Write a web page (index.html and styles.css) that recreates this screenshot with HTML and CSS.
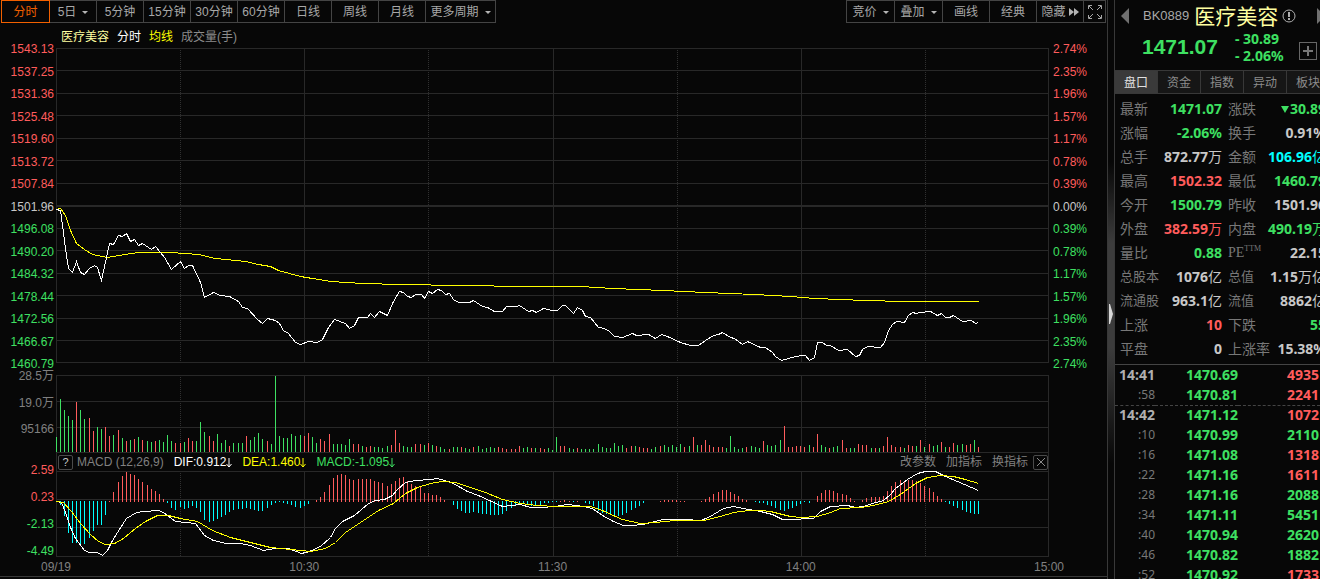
FILE: index.html
```html
<!DOCTYPE html>
<html lang="zh-CN">
<head>
<meta charset="utf-8">
<title>医疗美容 BK0889</title>
<link rel="stylesheet" href="styles.css">
</head>
<body>
<main class="board">
  <nav class="toolbar">
    <div class="group">
      <button class="tool active">分时</button>
      <button class="tool">5日<i class="caret"></i></button>
      <button class="tool">5分钟</button>
      <button class="tool">15分钟</button>
      <button class="tool">30分钟</button>
      <button class="tool">60分钟</button>
      <button class="tool">日线</button>
      <button class="tool">周线</button>
      <button class="tool">月线</button>
      <button class="tool wide">更多周期<i class="caret"></i></button>
    </div>
    <div class="group">
      <button class="tool menu">竞价<i class="caret"></i></button>
      <button class="tool menu">叠加<i class="caret"></i></button>
      <button class="tool">画线</button>
      <button class="tool">经典</button>
      <button class="tool">隐藏<svg class="skip" width="10" height="8" viewBox="0 0 10 8"><path d="M0 0L5 4L0 8ZM5 0L10 4L5 8Z" fill="#b4b4b4"/></svg></button>
      <button class="tool icon" aria-label="全屏"><svg width="14" height="14" viewBox="0 0 14 14" fill="none" stroke="#a8a8a8"><path d="M.5 4V.5H4M10 .5H13.5V4M13.5 10V13.5H10M4 13.5H.5V10M1 1L5 5M13 1L9 5M13 13L9 9M1 13L5 9"/></svg></button>
    </div>
  </nav>

  <div class="legend">
    <span class="cream">医疗美容</span><span class="white">分时</span><span class="yellow">均线</span><span class="muted">成交量(手)</span>
  </div>

  <section class="panel price">
    <div class="axis left">
      <span class="up">1543.13</span><span class="up">1537.25</span><span class="up">1531.36</span><span class="up">1525.48</span><span class="up">1519.60</span><span class="up">1513.72</span><span class="up">1507.84</span><span class="flat">1501.96</span><span class="down">1496.08</span><span class="down">1490.20</span><span class="down">1484.32</span><span class="down">1478.44</span><span class="down">1472.56</span><span class="down">1466.67</span><span class="down">1460.79</span>
    </div>
    <div class="plot"><svg id="price" viewBox="0 0 993 315" preserveAspectRatio="none"></svg></div>
    <div class="axis right">
      <span class="up">2.74%</span><span class="up">2.35%</span><span class="up">1.96%</span><span class="up">1.57%</span><span class="up">1.17%</span><span class="up">0.78%</span><span class="up">0.39%</span><span class="flat">0.00%</span><span class="down">0.39%</span><span class="down">0.78%</span><span class="down">1.17%</span><span class="down">1.57%</span><span class="down">1.96%</span><span class="down">2.35%</span><span class="down">2.74%</span>
    </div>
  </section>

  <section class="panel volume">
    <div class="axis left volume-axis"><span>28.5万</span><span>19.0万</span><span>95166</span></div>
    <div class="plot"><svg id="volume" viewBox="0 0 993 78" preserveAspectRatio="none"></svg></div>
  </section>

  <header class="macd-head">
    <button class="box help" aria-label="帮助">?</button>
    <span class="muted">MACD (12,26,9)</span>
    <span class="white">DIF:0.912<svg class="fall" viewBox="0 0 6 10"><path d="M3 0V9M.5 6L3 9L5.5 6"/></svg></span>
    <span class="yellow">DEA:1.460<svg class="fall" viewBox="0 0 6 10"><path d="M3 0V9M.5 6L3 9L5.5 6"/></svg></span>
    <span class="down">MACD:-1.095<svg class="fall" viewBox="0 0 6 10"><path d="M3 0V9M.5 6L3 9L5.5 6"/></svg></span>
    <div class="actions">
      <button class="link">改参数</button><button class="link">加指标</button><button class="link">换指标</button>
      <button class="box" aria-label="关闭"><svg width="8" height="8" viewBox="0 0 8 8" stroke="#8a8a8a"><path d="M0 0L8 8M8 0L0 8"/></svg></button>
    </div>
  </header>

  <section class="panel macd">
    <div class="axis left macd-axis"><span class="up">2.59</span><span class="up">0.23</span><span class="down">-2.13</span><span class="down">-4.49</span></div>
    <div class="plot"><svg id="macd" viewBox="0 0 993 86" preserveAspectRatio="none"></svg></div>
  </section>

  <div class="times"><span>09/19</span><span>10:30</span><span>11:30</span><span>14:00</span><span>15:00</span></div>
</main>

<div class="splitter"><svg width="4" height="20" viewBox="0 0 4 20"><path d="M0 0H1L4 10L1 20H0Z" fill="#d8d8d8"/></svg></div>

<aside class="quote">
  <div class="quote-body">
    <header class="head">
      <div class="title">
        <button class="prev" aria-label="上一个"></button>
        <span class="code">BK0889</span>
        <h1>医疗美容</h1>
        <svg class="info" width="14" height="14" viewBox="0 0 14 14" fill="none" stroke="#b0b0b0"><circle cx="7" cy="7" r="6"/><path d="M7 3V8M7 9V11" stroke-width="2"/></svg>
        <button class="next" aria-label="下一个"></button>
      </div>
      <div class="now">
        <strong class="last">1471.07</strong>
        <div class="change"><span>- 30.89</span><span>- 2.06%</span></div>
        <button class="add" aria-label="加自选"><svg width="10" height="10" viewBox="0 0 10 10" stroke="#777" stroke-width="2"><path d="M5 0V10M0 5H10"/></svg></button>
      </div>
    </header>

    <nav class="tabs">
      <button class="tab on">盘口</button><button class="tab">资金</button><button class="tab">指数</button><button class="tab">异动</button><button class="tab">板块</button>
    </nav>

    <table class="facts">
      <colgroup><col class="name"><col class="value"><col class="name-2"><col></colgroup>
      <tr><th>最新</th><td class="down">1471.07</td><th>涨跌</th><td class="down"><i class="drop"></i>30.89</td></tr>
      <tr><th>涨幅</th><td class="down">-2.06%</td><th>换手</th><td>0.91%</td></tr>
      <tr><th>总手</th><td>872.77<b>万</b></td><th>金额</th><td class="cyan">106.96<b>亿</b></td></tr>
      <tr><th>最高</th><td class="up">1502.32</td><th>最低</th><td class="down">1460.79</td></tr>
      <tr><th>今开</th><td class="down">1500.79</td><th>昨收</th><td>1501.96</td></tr>
      <tr><th>外盘</th><td class="up">382.59<b>万</b></td><th>内盘</th><td class="down">490.19<b>万</b></td></tr>
      <tr><th>量比</th><td class="down">0.88</td><th class="pe">PE<sup>TTM</sup></th><td>22.15</td></tr>
      <tr><th class="small">总股本</th><td>1076<b>亿</b></td><th class="small">总值</th><td>1.15<b>万亿</b></td></tr>
      <tr><th class="small">流通股</th><td>963.1<b>亿</b></td><th class="small">流值</th><td>8862<b>亿</b></td></tr>
      <tr><th>上涨</th><td class="up">10</td><th>下跌</th><td class="down">55</td></tr>
      <tr><th>平盘</th><td>0</td><th>上涨率</th><td>15.38%</td></tr>
    </table>

    <table class="trades">
      <tr><th class="minute">14:41</th><td class="down">1470.69</td><td class="up">4935</td></tr>
      <tr><th>:58</th><td class="down">1470.81</td><td class="up">2241</td></tr>
      <tr class="split"><th class="minute">14:42</th><td class="down">1471.12</td><td class="up">1072</td></tr>
      <tr><th>:10</th><td class="down">1470.99</td><td class="down">2110</td></tr>
      <tr><th>:16</th><td class="down">1471.08</td><td class="up">1318</td></tr>
      <tr><th>:22</th><td class="down">1471.16</td><td class="up">1611</td></tr>
      <tr><th>:28</th><td class="down">1471.16</td><td class="down">2088</td></tr>
      <tr><th>:34</th><td class="down">1471.11</td><td class="down">5451</td></tr>
      <tr><th>:40</th><td class="down">1470.94</td><td class="down">2620</td></tr>
      <tr><th>:46</th><td class="down">1470.82</td><td class="down">1882</td></tr>
      <tr><th>:52</th><td class="down">1470.92</td><td class="up">1733</td></tr>
    </table>
  </div>
</aside>
<script src="charts.js"></script>
</body>
</html>
```
FILE: styles.css
```css
* { box-sizing: border-box; }

body {
  margin: 0;
  height: 100vh;
  display: flex;
  overflow: hidden;
  background: #070707;
  color: #c8c8c8;
  font: 12px/16px "Liberation Sans", "Noto Sans CJK SC", sans-serif;
}

button {
  margin: 0;
  padding: 0;
  border: 0;
  background: none;
  color: inherit;
  font: inherit;
}

.up { color: #ff5c5c; }
.down { color: #3ee062; }
.flat { color: #c8c8c8; }
.white { color: #fff; }
.yellow { color: #ff0; }
.cream { color: #ffffa0; }
.cyan { color: #0ff; }
.muted { color: #808080; }

/* chart area */
.board {
  flex: 1;
  min-width: 0;
  display: flex;
  flex-direction: column;
  padding-bottom: 2px;
}

.toolbar {
  display: flex;
  justify-content: space-between;
  padding: 0 2px 0 1px;
}

.group { display: flex; }

.tool {
  display: flex;
  align-items: center;
  justify-content: center;
  width: 48px;
  height: 23px;
  margin-right: -1px;
  padding-top: 1px;
  border: 1px solid #444;
  color: #a8a8a8;
  white-space: nowrap;
}

.tool.active {
  position: relative;
  border-color: #f26000;
  color: #f26000;
}

.tool.active,
.tool.menu { width: 49px; }
.tool.wide { width: 71px; }
.tool.icon { width: 23px; }
.skip { margin-left: 3px; }

.caret {
  margin-left: 6px;
  border: 3px solid transparent;
  border-top-color: #b4b4b4;
  border-bottom: 0;
}

.legend {
  display: flex;
  gap: 8px;
  height: 25px;
  padding: 6px 0 0 61px;
}

.legend .muted { color: #8c8c8c; }

.panel {
  display: grid;
  grid-template-columns: 56px 1fr 58px;
}

.price {
  flex: 1;
  min-height: 0;
  margin-bottom: 12px;
}

.volume { height: 78px; }
.macd { height: 86px; }

.plot {
  position: relative;
  min-height: 0;
}

.plot svg {
  display: block;
  position: absolute;
  inset: 0;
  width: 100%;
  height: 100%;
  shape-rendering: crispEdges;
}

.plot path {
  fill: none;
  vector-effect: non-scaling-stroke;
}

.grid { stroke: #282828; }
.dots { stroke: #303030; stroke-dasharray: 1 1; }
.zero { stroke: #282828; stroke-width: 2; }
.bar-up { stroke: #ff5c5c; }
.bar-down { stroke: #3ee062; }
.bar-under { stroke: #0ff; }
.line-white { stroke: #fff; }
.line-yellow { stroke: #ff0; }

.axis {
  display: flex;
  flex-direction: column;
  justify-content: space-between;
  margin: -7px 0 -9px;
}

.axis.left {
  padding-right: 2px;
  text-align: right;
}

.axis.right { padding-left: 4px; }

.axis.volume-axis {
  margin-bottom: 16px;
  color: #808080;
}

.axis.macd-axis { margin: -9px 0 -2px; }

.macd-head {
  display: flex;
  align-items: center;
  gap: 10px;
  height: 18px;
  margin: 0 58px 0 56px;
  padding-left: 1px;
  border: 1px solid #282828;
  border-width: 0 1px;
  white-space: nowrap;
}

.macd-head .help { margin-right: -6px; }

.box {
  display: flex;
  align-items: center;
  justify-content: center;
  width: 15px;
  height: 15px;
  border: 1px solid #4a4a4a;
  border-radius: 2px;
  color: #c8c8c8;
  font-size: 11px;
}

.fall {
  width: 6px;
  height: 10px;
  margin-bottom: -2px;
  fill: none;
  stroke: currentColor;
}

.actions {
  display: flex;
  align-items: center;
  gap: 10px;
  margin-left: auto;
  color: #808080;
}

.actions .box { margin-left: -5px; }

.times {
  display: flex;
  justify-content: space-between;
  height: 19px;
  margin: 0 34px 0 32px;
  padding-top: 2px;
  color: #808080;
}

.times span {
  width: 48px;
  text-align: center;
}

.board::after {
  content: "";
  border-top: 1px solid #383838;
}

.splitter {
  display: flex;
  align-items: center;
  width: 8px;
  padding: 48px 0 0 1px;
  border: 1px solid #383838;
  border-width: 0 1px;
  background: linear-gradient(#070707 28%, #3c3c3c 42%, #3c3c3c 60%, #070707 80%);
}

/* quote panel */
.quote {
  width: 205px;
  overflow: hidden;
}

.quote-body { width: 216px; }

.head { height: 70px; }

.title {
  display: flex;
  align-items: center;
  height: 32px;
  padding-left: 6px;
}

.prev,
.next {
  border: 8px solid transparent;
  border-width: 8px 8px 8px 0;
  border-right-color: #707070;
}

.next {
  margin-left: 21px;
  border-width: 8px 0 8px 8px;
  border-left-color: #707070;
}

.code {
  margin-left: 14px;
  color: #a8a8a8;
  font-size: 13px;
}

.title h1 {
  margin: 0 0 0 5px;
  color: #ffffa0;
  font: 21px/28px "Noto Sans CJK SC", sans-serif;
  padding-bottom: 3px;
}

.info { margin-left: 4px; }

.now {
  display: flex;
  align-items: center;
  margin-top: -2px;
  padding-left: 27px;
  color: #3ee062;
}

.last {
  font-size: 21px;
  line-height: 30px;
}

.change {
  display: grid;
  width: 64px;
  margin-left: 17px;
  font: bold 14px/17px "Noto Sans", sans-serif;
}

.add {
  display: grid;
  place-items: center;
  width: 18px;
  height: 18px;
  margin-top: 8px;
  border: 1px solid #666;
}

.tabs {
  display: flex;
  height: 24px;
  border: 1px solid #383838;
  border-width: 1px 0;
}

.tab {
  flex: none;
  width: 43px;
  padding-top: 1px;
  border-right: 1px solid #383838;
  background: #161616;
  color: #8c8c8c;
}

.tab.on {
  background: #3a3a3a;
  color: #e0e0e0;
}

table {
  width: 100%;
  border-collapse: collapse;
  table-layout: fixed;
}

.facts { margin-top: 3px; }
.facts .name { width: 47px; }
.facts .value { width: 60px; }
.facts .name-2 { width: 38px; }

.facts th,
.facts td {
  height: 24px;
  padding: 0;
  font-size: 14px;
  line-height: 20px;
  white-space: nowrap;
}

.facts th {
  padding-left: 5px;
  color: #787878;
  font-weight: normal;
  text-align: left;
}

.facts td + th { padding-left: 6px; }
.facts th.small { font-size: 13px; }
.facts th.pe { font-family: "Liberation Serif", serif; }

.facts sup {
  font-size: 8px;
  line-height: 8px;
}

.facts td {
  font-family: "Noto Sans", "Noto Sans CJK SC", sans-serif;
  font-weight: bold;
  text-align: right;
}

.facts td b { font-weight: normal; }
.facts td:last-child { padding-right: 5px; }

.drop {
  display: inline-block;
  margin: 0 1px 1px 0;
  border: 4px solid transparent;
  border-top: 7px solid #3ee062;
  border-bottom: 0;
}

.trades {
  width: 205px;
  margin-top: 3px;
  border-top: 1px solid #444;
}

.trades th,
.trades td {
  height: 20px;
  padding: 0;
  font: bold 14px/20px "Noto Sans", sans-serif;
}

.trades th {
  width: 40px;
  color: #787878;
  font-size: 12px;
  font-weight: normal;
  text-align: right;
}

.trades th.minute {
  color: #b0b0b0;
  font-size: 14px;
  font-weight: bold;
}

.trades td { text-align: right; }
.trades th + td { width: 83px; }
.trades td:last-child { padding-right: 1px; }

.trades .split th,
.trades .split td {
  height: 19px;
  border-top: 1px dashed #444;
  line-height: 18px;
}
```
FILE: charts.js
```js
// One bar per trading minute, 240 minutes across the plot.
const STEP = 993 / 240;

const volume = `g15 g53 g42 g36 g32 r50 g42 g33 r34 r21 g25 g23 r25 r16 g17 r22 g14 r11 g12 r13
g15 r12 g11 g10 r11 g12 g10 g17 g11 r9 r9 g10 r14 r11 g11 g30 g20 r16 r11 g18
g9 g12 r6 g9 g9 g9 r16 g12 g15 g19 g13 r11 g8 g76 g16 g14 g14 g18 g16 g17
r16 r19 g15 g9 r13 r11 r18 g8 g8 g8 g7 g13 r8 r8 g6 r5 r6 g5 g5 g4
g6 r7 r22 r9 g6 g5 g5 r8 r8 g7 r9 g7 r6 g5 g3 r3 g5 g5 r5 g4
g3 r5 g6 g3 g4 g5 g4 r5 r4 r3 r3 r3 r6 g4 g5 r4 g4 r4 r3 g4
g2 g15 r6 r6 g4 g3 r4 g3 g3 g3 g3 g8 g5 g4 g4 g9 g6 g7 r4 r6
g6 r5 r4 r4 g3 g5 r6 g7 g5 g7 g5 g8 r5 g6 r15 g7 r7 r12 r7 r5
r5 r5 g4 g16 g5 g3 g4 r5 g6 g5 g4 r11 g7 g6 g7 g12 r26 r5 r5 r6
r6 r5 g7 r5 r18 g7 g5 r4 g5 g6 r12 r4 g4 g4 r8 r7 r7 g4 r4 g4
r6 r15 r7 r5 r5 g4 r7 r6 g6 r12 g5 r8 g6 g7 r10 g5 r5 r9 g7 g8
r7 r8 g12 r5`.split(/\s+/);

const macd = `0 -4 -15 -32 -42 -42 -44 -43 -37 -30 -24 -24 -14 1 10 20 26 30 28 27
23 20 17 13 11 8 3 -2 -7 -9 -6 -8 -7 -5 -7 -11 -19 -21 -20 -18
-16 -14 -11 -9 -8 -8 -7 -8 -9 -10 -10 -7 -4 -2 -1 -2 -3 -4 -6 -7
-5 -3 0 2 5 10 17 24 27 28 27 23 22 23 23 23 23 21 20 19
16 18 21 24 25 21 18 16 15 9 9 7 7 5 2 0 -4 -8 -10 -12
-12 -11 -12 -13 -13 -14 -14 -14 -13 -10 -7 -5 -4 -3 -4 -5 -5 -4 -2 -2
-1 -1 1 2 1 -1 1 0 -2 -3 -5 -10 -12 -13 -14 -15 -15 -14 -12 -9
-7 -5 -2 0 0 0 1 2 2 2 2 1 1 0 0 0 1 3 5 8
10 12 12 10 8 6 3 2 0 -1 -2 -2 -4 -5 -7 -9 -10 -8 -7 -5
-3 -1 -2 0 6 9 12 12 11 9 8 7 4 1 0 2 4 5 5 5
6 11 16 20 22 21 22 22 21 19 16 14 10 6 3 -1 -3 -5 -7 -9
-11 -12 -13 -13`.split(/\s+/).map(Number);

const priceLine = `0,161 4,162 7,184 9,200 12,220 16,224 20,213 24,224 28,226 33,220 38,217 41,219 45,232 48,218 53,195 57,196 62,187 66,188 70,185 74,193 78,191 82,197 86,195 95,201 99,198 104,204 108,209 115,221 124,213 128,220 132,217 136,217 144,234 148,249 157,244 164,247 173,248 182,253 186,259 191,260 201,271 206,275 211,270 219,272 223,275 227,282 232,285 239,294 244,296 252,293 261,294 266,291 272,279 278,271 289,275 293,280 298,277 302,269 311,269 314,265 318,269 323,263 331,267 336,255 340,248 343,243 347,244 351,248 355,249 359,246 365,246 368,250 372,243 376,245 381,241 385,242 389,246 393,245 397,251 402,254 413,254 417,252 426,258 431,259 438,263 446,263 450,258 460,258 463,257 472,263 476,262 480,264 487,260 496,262 501,262 506,257 509,257 517,265 521,259 526,262 529,268 534,269 542,279 548,280 553,283 558,288 566,289 576,285 580,287 592,286 599,290 605,286 611,288 624,294 634,297 642,297 649,292 657,287 662,286 666,284 674,289 678,290 686,296 691,293 704,299 709,299 716,304 719,308 725,312 739,308 746,307 749,307 753,312 758,309 761,294 766,294 770,297 774,297 782,302 791,301 799,308 803,307 806,301 811,298 824,299 828,294 832,282 836,276 840,273 848,274 852,267 856,264 860,265 863,264 874,263 881,267 885,265 889,269 893,269 897,267 906,273 915,272 919,275 922,274`;
const averageLine = `0,161 4,160 9,167 14,182 20,195 28,201 36,206 51,209 62,207 82,204 114,204 142,206 159,210 189,213 202,216 214,218 222,222 244,228 274,233 306,235 344,236 404,237 470,238 524,238 557,240 607,242 649,244 698,246 734,248 759,250 809,252 847,253 922,253`;
const difLine = `0,30 5,31 9,41 14,56 19,67 28,79 33,81 41,81 46,84 51,79 56,69 61,61 70,47 80,41 88,40 102,39 107,41 119,50 130,51 139,52 148,64 157,69 170,72 184,72 194,74 207,79 219,77 232,77 245,82 253,80 264,75 274,66 279,57 286,50 298,44 312,32 319,29 328,28 336,24 341,18 349,11 359,9 374,8 381,7 395,11 404,16 411,20 422,24 446,35 464,33 474,36 484,36 499,35 511,33 527,35 536,37 546,44 557,50 567,54 576,54 586,53 607,48 629,48 644,49 652,46 667,37 677,35 692,38 704,40 716,43 726,48 742,48 747,47 757,47 764,40 774,35 791,34 799,36 807,35 816,32 827,29 834,23 839,17 851,8 861,2 869,0 879,0 889,5 901,10 922,19`;
const deaLine = `0,30 7,31 15,40 24,52 34,63 42,70 49,73 58,72 67,67 79,57 89,50 101,44 112,44 124,47 141,50 156,59 174,66 194,71 214,76 234,78 254,80 269,77 279,71 289,61 304,51 322,39 337,32 349,22 361,16 374,12 386,10 399,11 414,16 429,21 446,28 464,32 481,34 499,35 534,35 546,39 559,45 566,48 584,52 599,51 619,49 647,49 664,45 677,41 692,39 704,39 714,40 734,45 744,46 761,45 774,41 784,37 804,36 817,34 832,30 844,23 859,12 871,6 884,4 897,5 909,8 922,12`;

const path = (cls, d) => `<path class="${cls}" d="${d}"/>`;

// Points name whole pixels; the half puts the stroke on the pixel's centre.
const line = (cls, points) => path(cls, 'M' + points.split(' ')
  .map(p => p.split(',').map(n => +n + 0.5).join(' ')).join('L'));

function grid(height, rows) {
  const across = rows.map(y => `M0 ${y + 0.5}H993`).join('');
  const down = [0, 248, 497, 745, 992].map(x => `M${x + 0.5} 0V${height}`).join('');
  const dots = [124, 372, 621, 869].map(x => `M${x + 0.5} 0V${height}`).join('');
  return path('dots', dots) + path('grid', across + down);
}

const barX = i => Math.floor(i * STEP) + 0.5;

document.getElementById('price').innerHTML =
  grid(315, [0, 22, 45, 67, 90, 112, 135, 157, 180, 202, 225, 247, 270, 292, 314]) +
  path('zero', 'M0 158H993') +
  line('line-yellow', averageLine) + line('line-white', priceLine);

const volumeBars = color => volume
  .map((v, i) => v[0] === color ? `M${barX(i)} 77V${77 - v.slice(1)}` : '').join('');

document.getElementById('volume').innerHTML =
  grid(78, [0, 26, 52, 77]) +
  path('bar-down', volumeBars('g')) + path('bar-up', volumeBars('r'));

const macdBars = sign => macd
  .map((v, i) => v * sign > 0 ? `M${barX(i)} ${sign > 0 ? 31 : 30}v${-v}` : '').join('');

document.getElementById('macd').innerHTML =
  grid(86, [0, 28, 56, 85]) +
  path('bar-up', macdBars(1)) + path('bar-under', macdBars(-1)) +
  line('line-white', difLine) + line('line-yellow', deaLine);
```
